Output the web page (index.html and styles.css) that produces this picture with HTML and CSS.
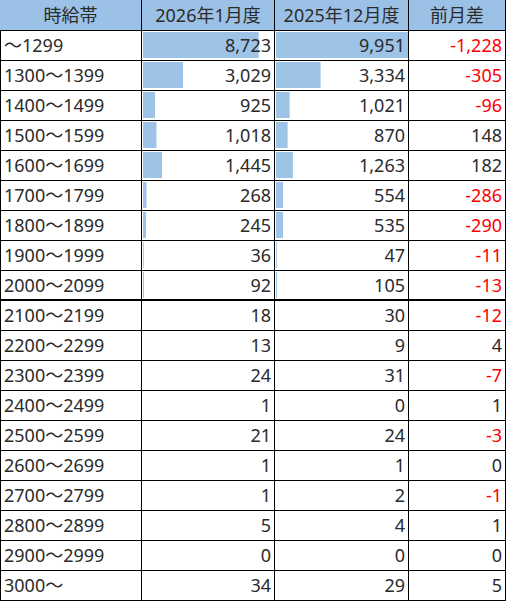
FILE: index.html
```html
<!DOCTYPE html>
<html lang="ja">

<head>
    <meta charset="UTF-8">
    <meta name="viewport" content="width=device-width, initial-scale=1.0">
    <title>時給帯別 件数</title>
    <link rel="stylesheet" href="styles.css">
</head>

<body>
    <table class="wages">
        <thead>
            <tr>
                <th class="band-col">時給帯</th>
                <th class="cur-col">2026年1月度</th>
                <th class="prev-col">2025年12月度</th>
                <th class="diff-col">前月差</th>
            </tr>
        </thead>
        <tbody>
            <tr>
                <td class="band">～1299</td>
                <td class="num bar" style="--bar: 87.66%">8,723</td>
                <td class="num bar" style="--bar: 100%">9,951</td>
                <td class="num minus">-1,228</td>
            </tr>
            <tr>
                <td class="band">1300～1399</td>
                <td class="num bar" style="--bar: 30.44%">3,029</td>
                <td class="num bar" style="--bar: 33.50%">3,334</td>
                <td class="num minus">-305</td>
            </tr>
            <tr>
                <td class="band">1400～1499</td>
                <td class="num bar" style="--bar: 9.30%">925</td>
                <td class="num bar" style="--bar: 10.26%">1,021</td>
                <td class="num minus">-96</td>
            </tr>
            <tr>
                <td class="band">1500～1599</td>
                <td class="num bar" style="--bar: 10.23%">1,018</td>
                <td class="num bar" style="--bar: 8.74%">870</td>
                <td class="num">148</td>
            </tr>
            <tr>
                <td class="band">1600～1699</td>
                <td class="num bar" style="--bar: 14.52%">1,445</td>
                <td class="num bar" style="--bar: 12.69%">1,263</td>
                <td class="num">182</td>
            </tr>
            <tr>
                <td class="band">1700～1799</td>
                <td class="num bar" style="--bar: 2.69%">268</td>
                <td class="num bar" style="--bar: 5.57%">554</td>
                <td class="num minus">-286</td>
            </tr>
            <tr>
                <td class="band">1800～1899</td>
                <td class="num bar" style="--bar: 2.46%">245</td>
                <td class="num bar" style="--bar: 5.38%">535</td>
                <td class="num minus">-290</td>
            </tr>
            <tr>
                <td class="band">1900～1999</td>
                <td class="num bar" style="--bar: 0.6%">36</td>
                <td class="num bar" style="--bar: 0.6%">47</td>
                <td class="num minus">-11</td>
            </tr>
            <tr class="split">
                <td class="band">2000～2099</td>
                <td class="num bar" style="--bar: 0.92%">92</td>
                <td class="num bar" style="--bar: 1.06%">105</td>
                <td class="num minus">-13</td>
            </tr>
            <tr>
                <td class="band">2100～2199</td>
                <td class="num">18</td>
                <td class="num">30</td>
                <td class="num minus">-12</td>
            </tr>
            <tr>
                <td class="band">2200～2299</td>
                <td class="num">13</td>
                <td class="num">9</td>
                <td class="num">4</td>
            </tr>
            <tr>
                <td class="band">2300～2399</td>
                <td class="num">24</td>
                <td class="num">31</td>
                <td class="num minus">-7</td>
            </tr>
            <tr>
                <td class="band">2400～2499</td>
                <td class="num">1</td>
                <td class="num">0</td>
                <td class="num">1</td>
            </tr>
            <tr>
                <td class="band">2500～2599</td>
                <td class="num">21</td>
                <td class="num">24</td>
                <td class="num minus">-3</td>
            </tr>
            <tr>
                <td class="band">2600～2699</td>
                <td class="num">1</td>
                <td class="num">1</td>
                <td class="num">0</td>
            </tr>
            <tr>
                <td class="band">2700～2799</td>
                <td class="num">1</td>
                <td class="num">2</td>
                <td class="num minus">-1</td>
            </tr>
            <tr>
                <td class="band">2800～2899</td>
                <td class="num">5</td>
                <td class="num">4</td>
                <td class="num">1</td>
            </tr>
            <tr>
                <td class="band">2900～2999</td>
                <td class="num">0</td>
                <td class="num">0</td>
                <td class="num">0</td>
            </tr>
            <tr>
                <td class="band">3000～</td>
                <td class="num">34</td>
                <td class="num">29</td>
                <td class="num">5</td>
            </tr>
        </tbody>
    </table>
</body>

</html>
```

FILE: styles.css
```css
html,
body {
    margin: 0;
    padding: 0;
    background: #fff;
    font-family: "Noto Sans", "Noto Sans CJK JP", sans-serif;
}

.wages {
    border-collapse: separate;
    border-spacing: 0;
    table-layout: fixed;
    width: 506px;
    font-size: 18px;
    color: #2b2b2b;
}

.wages th,
.wages td {
    box-sizing: border-box;
    padding: 0;
    border-right: 1px solid #000;
    border-bottom: 1px solid #000;
    white-space: nowrap;
    overflow: hidden;
}

.wages th {
    height: 31px;
    line-height: 30px;
    font-weight: normal;
    text-align: center;
    background: #9bc2e6;
}

.band-col { width: 142px; }
.cur-col { width: 133px; }
.prev-col { width: 134px; }
.diff-col { width: 97px; }

.wages td {
    height: 30px;
    line-height: 29px;
}

.wages td.band {
    border-left: 1px solid #000;
    padding-left: 3px;
    text-align: left;
}

.num {
    text-align: right;
    padding-right: 3px !important;
}

.minus {
    color: #ff0000;
}

/* data bar, width comes from the value */
.bar {
    background-image: linear-gradient(#9dc3e6, #9dc3e6);
    background-repeat: no-repeat;
    background-position: 1px 1px;
    background-size: var(--bar) 26px;
}

.split td {
    border-bottom-width: 2px;
    line-height: 28px;
}
```
